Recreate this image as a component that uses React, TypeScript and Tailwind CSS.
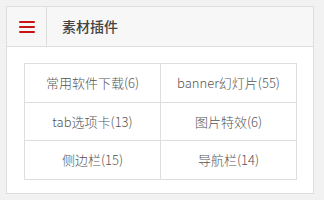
const items = [
  "常用软件下载(6)",
  "banner幻灯片(55)",
  "tab选项卡(13)",
  "图片特效(6)",
  "侧边栏(15)",
  "导航栏(14)",
];

export default function App() {
  return (
    <div
      className="w-[324px] h-[200px] bg-[#f2f2f2] pt-[6px] pl-[6px] overflow-hidden"
      style={{ fontFamily: '"Noto Sans CJK SC", "Noto Sans", sans-serif' }}
    >
      {/* Card */}
      <div className="w-[308px] h-[188px] bg-white border border-[#dedede] flex flex-col">
        {/* Header */}
        <div className="h-[40px] flex bg-[#f7f7f7] border-b border-[#dedede]">
          <div className="w-[40px] border-r border-[#dedede] flex flex-col items-center justify-center gap-[3px] pl-[1px]">
            <span className="block w-[16px] h-[2px] bg-[#c81414] rounded-[1px]" />
            <span className="block w-[16px] h-[2px] bg-[#c81414] rounded-[1px]" />
            <span className="block w-[16px] h-[2px] bg-[#c81414] rounded-[1px]" />
          </div>
          <div className="flex items-center pl-[15px] text-[14px] font-medium text-[#444]">
            素材插件
          </div>
        </div>

        {/* Body */}
        <div className="pt-[16px] pl-[17px]">
          <div className="w-[273px] grid grid-cols-2 border-t border-l border-[#dedede]">
            {items.map((t) => (
              <div
                key={t}
                className="h-[38.7px] flex items-center justify-center border-r border-b border-[#dedede] text-[13px] font-light text-[#555]"
              >
                {t}
              </div>
            ))}
          </div>
        </div>
      </div>
    </div>
  );
}
